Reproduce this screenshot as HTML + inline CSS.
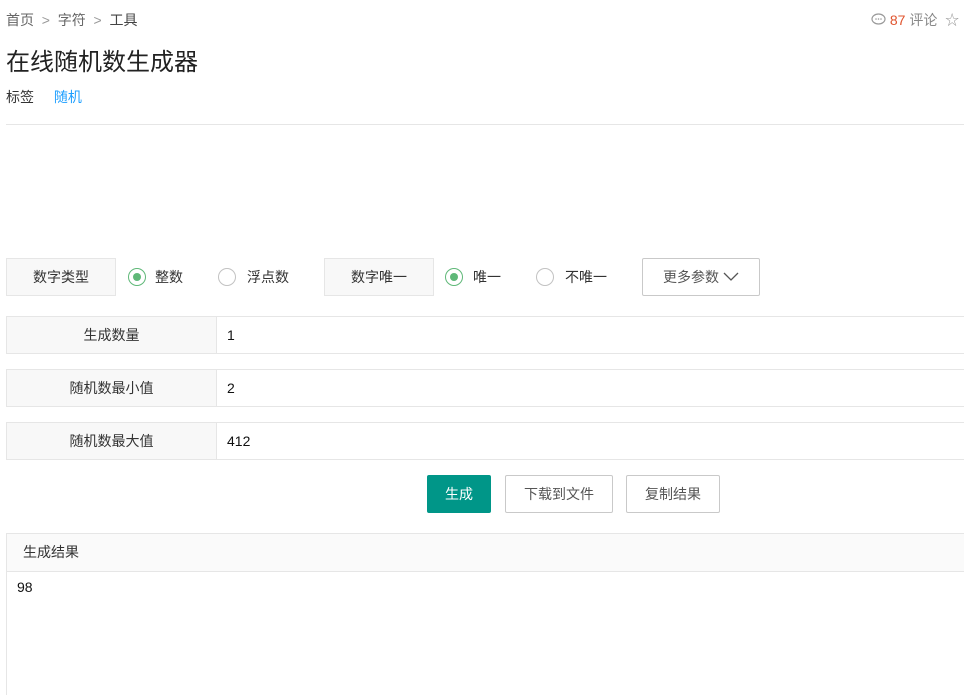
<!DOCTYPE html>
<html style="overflow:hidden;height:695px"><head><meta charset="utf-8"><style>
body{margin:0;width:964px;height:695px;overflow:hidden;background:#fff;font-family:"Liberation Sans","Noto Sans CJK SC",sans-serif;color:#333;position:relative}
.a{position:absolute;white-space:nowrap}
.box{position:absolute;box-sizing:border-box;border:1px solid #e6e6e6;background:#f8f8f8;font-size:14px;display:flex;align-items:center;justify-content:center}
.r{position:absolute;width:18px;height:18px;box-sizing:border-box;border:1px solid #c2c2c2;border-radius:50%}
.r.on{border-color:#5fb878}
.r.on:after{content:"";position:absolute;left:4px;top:4px;width:8px;height:8px;border-radius:50%;background:#5fb878}
.t{position:absolute;font-size:14px;line-height:38px}
.row{position:absolute;left:6px;width:958px;height:38px;box-sizing:border-box;border:1px solid #e6e6e6;border-right:none;font-size:14px}
.row .l{position:absolute;left:0;top:0;width:209px;height:36px;background:#f8f8f8;border-right:1px solid #e6e6e6;text-align:center;line-height:36px}
.row .v{position:absolute;left:220px;top:0;line-height:36px;color:#111}
.btn{position:absolute;top:475px;height:38px;box-sizing:border-box;border:1px solid #c9c9c9;background:#fff;font-size:14px;line-height:36px;text-align:center;color:#555;border-radius:2px}
</style></head><body>
<div class="a" style="left:6px;top:10px;font-size:14px;color:#666">首页 &nbsp;<span style="color:#999">&gt;</span>&nbsp; 字符 &nbsp;<span style="color:#999">&gt;</span>&nbsp; <span style="color:#444">工具</span></div>
<div class="a" style="left:871px;top:10px;font-size:14px;color:#888"><svg width="15" height="13" viewBox="0 0 15 13" style="vertical-align:-1px"><ellipse cx="7.5" cy="6" rx="6.5" ry="5" fill="none" stroke="#999" stroke-width="1.2"/><circle cx="5" cy="6" r=".8" fill="#999"/><circle cx="7.5" cy="6" r=".8" fill="#999"/><circle cx="10" cy="6" r=".8" fill="#999"/></svg> <span style="color:#e0542e">87</span> 评论 &nbsp;<span style="color:#999">☆</span></div>
<div class="a" style="left:6px;top:42px;font-size:24px;color:#222">在线随机数生成器</div>
<div class="a" style="left:6px;top:87px;font-size:14px;color:#333">标签 <span style="color:#1e9fff;margin-left:16px">随机</span></div>
<div class="a" style="left:6px;top:124px;width:958px;height:1px;background:#e6e6e6"></div>

<div class="box" style="left:6px;top:258px;width:110px;height:38px">数字类型</div>
<div class="r on" style="left:128px;top:268px"></div><div class="t" style="left:155px;top:258px">整数</div>
<div class="r" style="left:218px;top:268px"></div><div class="t" style="left:247px;top:258px">浮点数</div>
<div class="box" style="left:324px;top:258px;width:110px;height:38px">数字唯一</div>
<div class="r on" style="left:445px;top:268px"></div><div class="t" style="left:473px;top:258px">唯一</div>
<div class="r" style="left:536px;top:268px"></div><div class="t" style="left:565px;top:258px">不唯一</div>
<div class="btn" style="left:642px;top:258px;width:118px;color:#555">更多参数 <svg width="16" height="10" viewBox="0 0 16 10" style="vertical-align:0"><path d="M1 1l7 7 7-7" fill="none" stroke="#555" stroke-width="1.3"/></svg></div>

<div class="row" style="top:316px"><div class="l">生成数量</div><div class="v">1</div></div>
<div class="row" style="top:369px"><div class="l">随机数最小值</div><div class="v">2</div></div>
<div class="row" style="top:422px"><div class="l">随机数最大值</div><div class="v">412</div></div>

<div class="btn" style="left:427px;width:64px;background:#009688;border-color:#009688;color:#fff">生成</div>
<div class="btn" style="left:505px;width:108px">下载到文件</div>
<div class="btn" style="left:626px;width:94px">复制结果</div>

<div class="a" style="left:6px;top:533px;width:958px;height:162px;box-sizing:border-box;border:1px solid #e6e6e6;border-right:none;border-bottom:none">
<div style="height:37px;background:#fafafa;border-bottom:1px solid #e6e6e6;font-size:14px;line-height:37px;padding-left:16px;color:#333">生成结果</div>
<div style="font-size:14px;padding:7px 10px;color:#111">98</div>
</div>
</body></html>
